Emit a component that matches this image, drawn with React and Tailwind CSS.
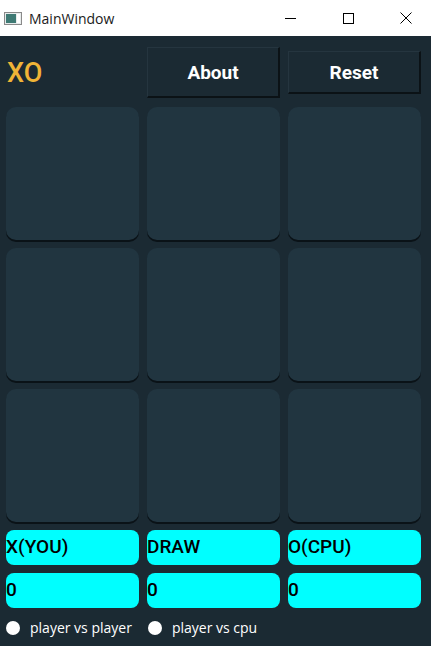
import { useState } from 'react';

const cells = Array.from({ length: 9 });

function TitleBar() {
  return (
    <div className="h-[36px] bg-white flex items-center text-[14px] text-[#1a1a1a]" style={{ fontFamily: '"Open Sans", "Noto Sans", sans-serif' }}>
      <div className="ml-[4px] w-[18px] h-[13px] border border-[#8a8a8a] bg-[#e8ecec] flex">
        <div className="w-[10px] bg-[#3f7a74] m-[1px]" />
        <div className="flex-1 bg-white m-[1px] ml-0" />
      </div>
      <span className="ml-[7px]">MainWindow</span>
      <div className="ml-auto flex items-center h-full">
        <div className="w-[46px] flex justify-center">
          <div className="w-[11px] h-px bg-black" />
        </div>
        <div className="w-[46px] ml-[12px] flex justify-center">
          <div className="w-[11px] h-[11px] border border-black" />
        </div>
        <div className="w-[46px] ml-[12px] mr-[2px] flex justify-center">
          <svg width="12" height="12" viewBox="0 0 12 12">
            <path d="M0.5 0.5 L11.5 11.5 M11.5 0.5 L0.5 11.5" stroke="black" strokeWidth="1" />
          </svg>
        </div>
      </div>
    </div>
  );
}

export default function App() {
  const [mode, setMode] = useState(null);

  return (
    <div className="w-[431px] h-[646px] bg-[#1b2a33] flex flex-col" style={{ fontFamily: 'Roboto, "Liberation Sans", sans-serif' }}>
      <TitleBar />
      <div className="pl-[6px] pr-[10px] flex flex-col">
        <div className="grid grid-cols-3 gap-x-[8px] h-[71px] items-center">
          <div className="text-[27px] font-medium text-[#f0b437] pl-[1px] pt-[3px]">XO</div>
          <button className="h-[51px] mt-[2px] bg-[#1b2a33] border border-[#25353f] border-b-[2px] border-r-[2px] border-b-[#0b1216] border-r-[#0b1216] text-white text-[19px] font-bold pt-[2px]">About</button>
          <button className="h-[43px] mt-[2px] bg-[#1b2a33] border border-[#25353f] border-b-[2px] border-r-[2px] border-b-[#0b1216] border-r-[#0b1216] text-white text-[19px] font-bold pt-[2px]">Reset</button>
        </div>
        <div className="grid grid-cols-3 gap-[8px]">
          {cells.map((_, i) => (
            <div key={i} className="h-[133px] rounded-[10px] bg-[#213540] shadow-[0_2px_0_#0a1217]" />
          ))}
        </div>
        <div className="grid grid-cols-3 gap-x-[8px] gap-y-[8px] mt-[8px]">
          {['X(YOU)', 'DRAW', 'O(CPU)'].map((t) => (
            <div key={t} className="h-[35px] rounded-[8px] bg-[#00ffff] flex items-center text-[19px] font-medium text-black">{t}</div>
          ))}
          {[0, 1, 2].map((i) => (
            <div key={i} className="h-[35px] rounded-[8px] bg-[#00ffff] flex items-center text-[19px] font-medium text-black">0</div>
          ))}
        </div>
        <div className="flex items-center mt-[9px] text-[14px] text-white" style={{ fontFamily: '"Open Sans", "Noto Sans", sans-serif' }}>
          <label className="flex items-center cursor-pointer" onClick={() => setMode('pvp')}>
            <span className="w-[14px] h-[14px] rounded-full bg-white flex items-center justify-center">
              {mode === 'pvp' && <span className="w-[6px] h-[6px] rounded-full bg-black" />}
            </span>
            <span className="ml-[10px]">player vs player</span>
          </label>
          <label className="flex items-center cursor-pointer ml-[16px]" onClick={() => setMode('cpu')}>
            <span className="w-[14px] h-[14px] rounded-full bg-white flex items-center justify-center">
              {mode === 'cpu' && <span className="w-[6px] h-[6px] rounded-full bg-black" />}
            </span>
            <span className="ml-[10px]">player vs cpu</span>
          </label>
        </div>
      </div>
    </div>
  );
}
